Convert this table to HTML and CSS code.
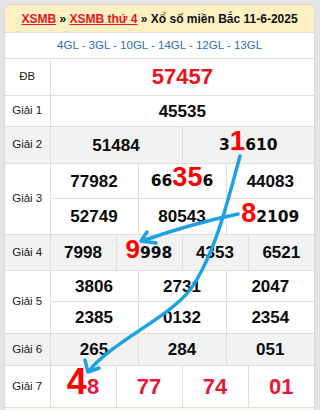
FILE: index.html
```html
<!DOCTYPE html>
<html lang="vi">
<head>
<meta charset="utf-8">
<title>XSMB thứ 4</title>
<link rel="stylesheet" href="styles.css">
</head>
<body>
<div class="page">
  <div class="card">
    <table class="kq">
      <colgroup>
        <col class="c-lbl">
        <col class="c"><col class="c"><col class="c"><col class="c"><col class="c"><col class="c">
        <col class="c"><col class="c"><col class="c"><col class="c"><col class="c"><col class="c">
      </colgroup>
      <tr class="r-title">
        <td colspan="13" class="title"><a href="#">XSMB</a> » <a href="#">XSMB thứ 4</a> » Xổ số miền Bắc 11-6-2025</td>
      </tr>
      <tr class="r-gl">
        <td colspan="13" class="gl">4GL - 3GL - 10GL - 14GL - 12GL - 13GL</td>
      </tr>
      <tr class="r-db">
        <td class="lbl">ĐB</td>
        <td colspan="12" class="db">57457</td>
      </tr>
      <tr class="r-g1">
        <td class="lbl">Giải 1</td>
        <td colspan="12" class="n">45535</td>
      </tr>
      <tr class="r-g2 alt">
        <td class="lbl">Giải 2</td>
        <td colspan="6" class="n">51484</td>
        <td colspan="6" class="n"><span class="w">3</span><span class="big b1">1</span><span class="w">610</span></td>
      </tr>
      <tr class="r-g3a">
        <td class="lbl" rowspan="2">Giải 3</td>
        <td colspan="4" class="n">77982</td>
        <td colspan="4" class="n"><span class="w">66</span><span class="big b35">35</span><span class="w">6</span></td>
        <td colspan="4" class="n">44083</td>
      </tr>
      <tr class="r-g3b">
        <td colspan="4" class="n">52749</td>
        <td colspan="4" class="n">80543</td>
        <td colspan="4" class="n"><span class="big b8">8</span><span class="w">2109</span></td>
      </tr>
      <tr class="r-g4 alt">
        <td class="lbl">Giải 4</td>
        <td colspan="3" class="n">7998</td>
        <td colspan="3" class="n"><span class="big b9">9</span><span class="w">998</span></td>
        <td colspan="3" class="n">4353</td>
        <td colspan="3" class="n">6521</td>
      </tr>
      <tr class="r-g5a">
        <td class="lbl" rowspan="2">Giải 5</td>
        <td colspan="4" class="n">3806</td>
        <td colspan="4" class="n">2731</td>
        <td colspan="4" class="n">2047</td>
      </tr>
      <tr class="r-g5b">
        <td colspan="4" class="n">2385</td>
        <td colspan="4" class="n">0132</td>
        <td colspan="4" class="n">2354</td>
      </tr>
      <tr class="r-g6 alt">
        <td class="lbl">Giải 6</td>
        <td colspan="4" class="n">265</td>
        <td colspan="4" class="n">284</td>
        <td colspan="4" class="n">051</td>
      </tr>
      <tr class="r-g7">
        <td class="lbl">Giải 7</td>
        <td colspan="3" class="n7"><span class="big b4">4</span>8</td>
        <td colspan="3" class="n7">77</td>
        <td colspan="3" class="n7">74</td>
        <td colspan="3" class="n7">01</td>
      </tr>
      <tr class="r-foot">
        <td colspan="13" class="foot"></td>
      </tr>
    </table>
  </div>
  <svg class="arrows" width="320" height="410" viewBox="0 0 320 410" aria-hidden="true">
    <g fill="none" stroke="#1ba1e4" stroke-width="3.5" stroke-linecap="round" stroke-linejoin="round">
      <path d="M240,156 C228,200 215,255 190,290 C168,318 112,342 89,371"/>
      <path d="M85,360 L88,372 L99,368"/>
      <path d="M238,214 Q190,224 142,241"/>
      <path d="M147,232 L141,241 L156,243"/>
    </g>
  </svg>
</div>
</body>
</html>
```
FILE: styles.css
```css
html, body {
  margin: 0;
  padding: 0;
}
body {
  background: #e4e4e4;
  font-family: "Liberation Sans", Arial, sans-serif;
  color: #111;
}
.page {
  position: relative;
  width: 320px;
  height: 410px;
  overflow: hidden;
  padding: 4px 5px 0 4px;
  box-sizing: border-box;
}
.card {
  width: 311px;
  border: 1px solid #d8d8d8;
  border-bottom: none;
  border-radius: 6px 6px 0 0;
  overflow: hidden;
  background: #fff;
  box-sizing: border-box;
}
.kq {
  width: 309px;
  table-layout: fixed;
  border-collapse: collapse;
  border-style: hidden;
}
.c-lbl { width: 45px; }
.c { width: 22px; }
.kq td {
  border: 1px solid #dedede;
  padding: 0;
  text-align: center;
  vertical-align: middle;
  white-space: nowrap;
  line-height: 1;
}
.r-title td { height: 27px; }
.title {
  background: #fdf1c4;
  font-weight: bold;
  font-size: 12px;
  color: #111;
}
.title a {
  color: #e8141c;
  text-decoration: underline;
}
.r-gl td { height: 25px; }
.gl {
  font-size: 11.5px;
  color: #1f6fb5;
}
.r-db td { height: 36px; }
.r-g1 td { height: 30px; }
.r-g2 td { height: 36px; }
.r-g3a td { height: 34px; }
.r-g3b td { height: 35px; }
.r-g4 td { height: 35px; }
.r-g5a td { height: 30px; }
.r-g5b td { height: 31px; }
.r-g6 td { height: 31px; }
.r-g7 td { height: 41px; }
.r-foot td { height: 20px; background: #fdf8ec; }
.alt td { background: #f2f2f2; }
.lbl {
  font-size: 11.5px;
  color: #1a1a1a;
}
.db {
  font-size: 22px;
  font-weight: bold;
  color: #e8141c;
}
.n {
  font-size: 17px;
  font-weight: bold;
  color: #0a0a0a;
}
.n7 {
  font-size: 22px;
  font-weight: bold;
  color: #e6173a;
}
.w {
  font-family: "DejaVu Sans", Verdana, sans-serif;
  font-size: 15.5px;
  font-weight: bold;
  color: #0a0a0a;
}
.big {
  font-family: "Liberation Sans", Arial, sans-serif;
  font-weight: bold;
  color: #ff0000;
  line-height: 0;
}
.b1 { font-size: 28px; }
.b35 { font-size: 27px; }
.b8 { font-size: 27px; }
.b9 { font-size: 26px; }
.b4 { font-size: 36px; }
.arrows {
  position: absolute;
  left: 0;
  top: 0;
  pointer-events: none;
}
```
